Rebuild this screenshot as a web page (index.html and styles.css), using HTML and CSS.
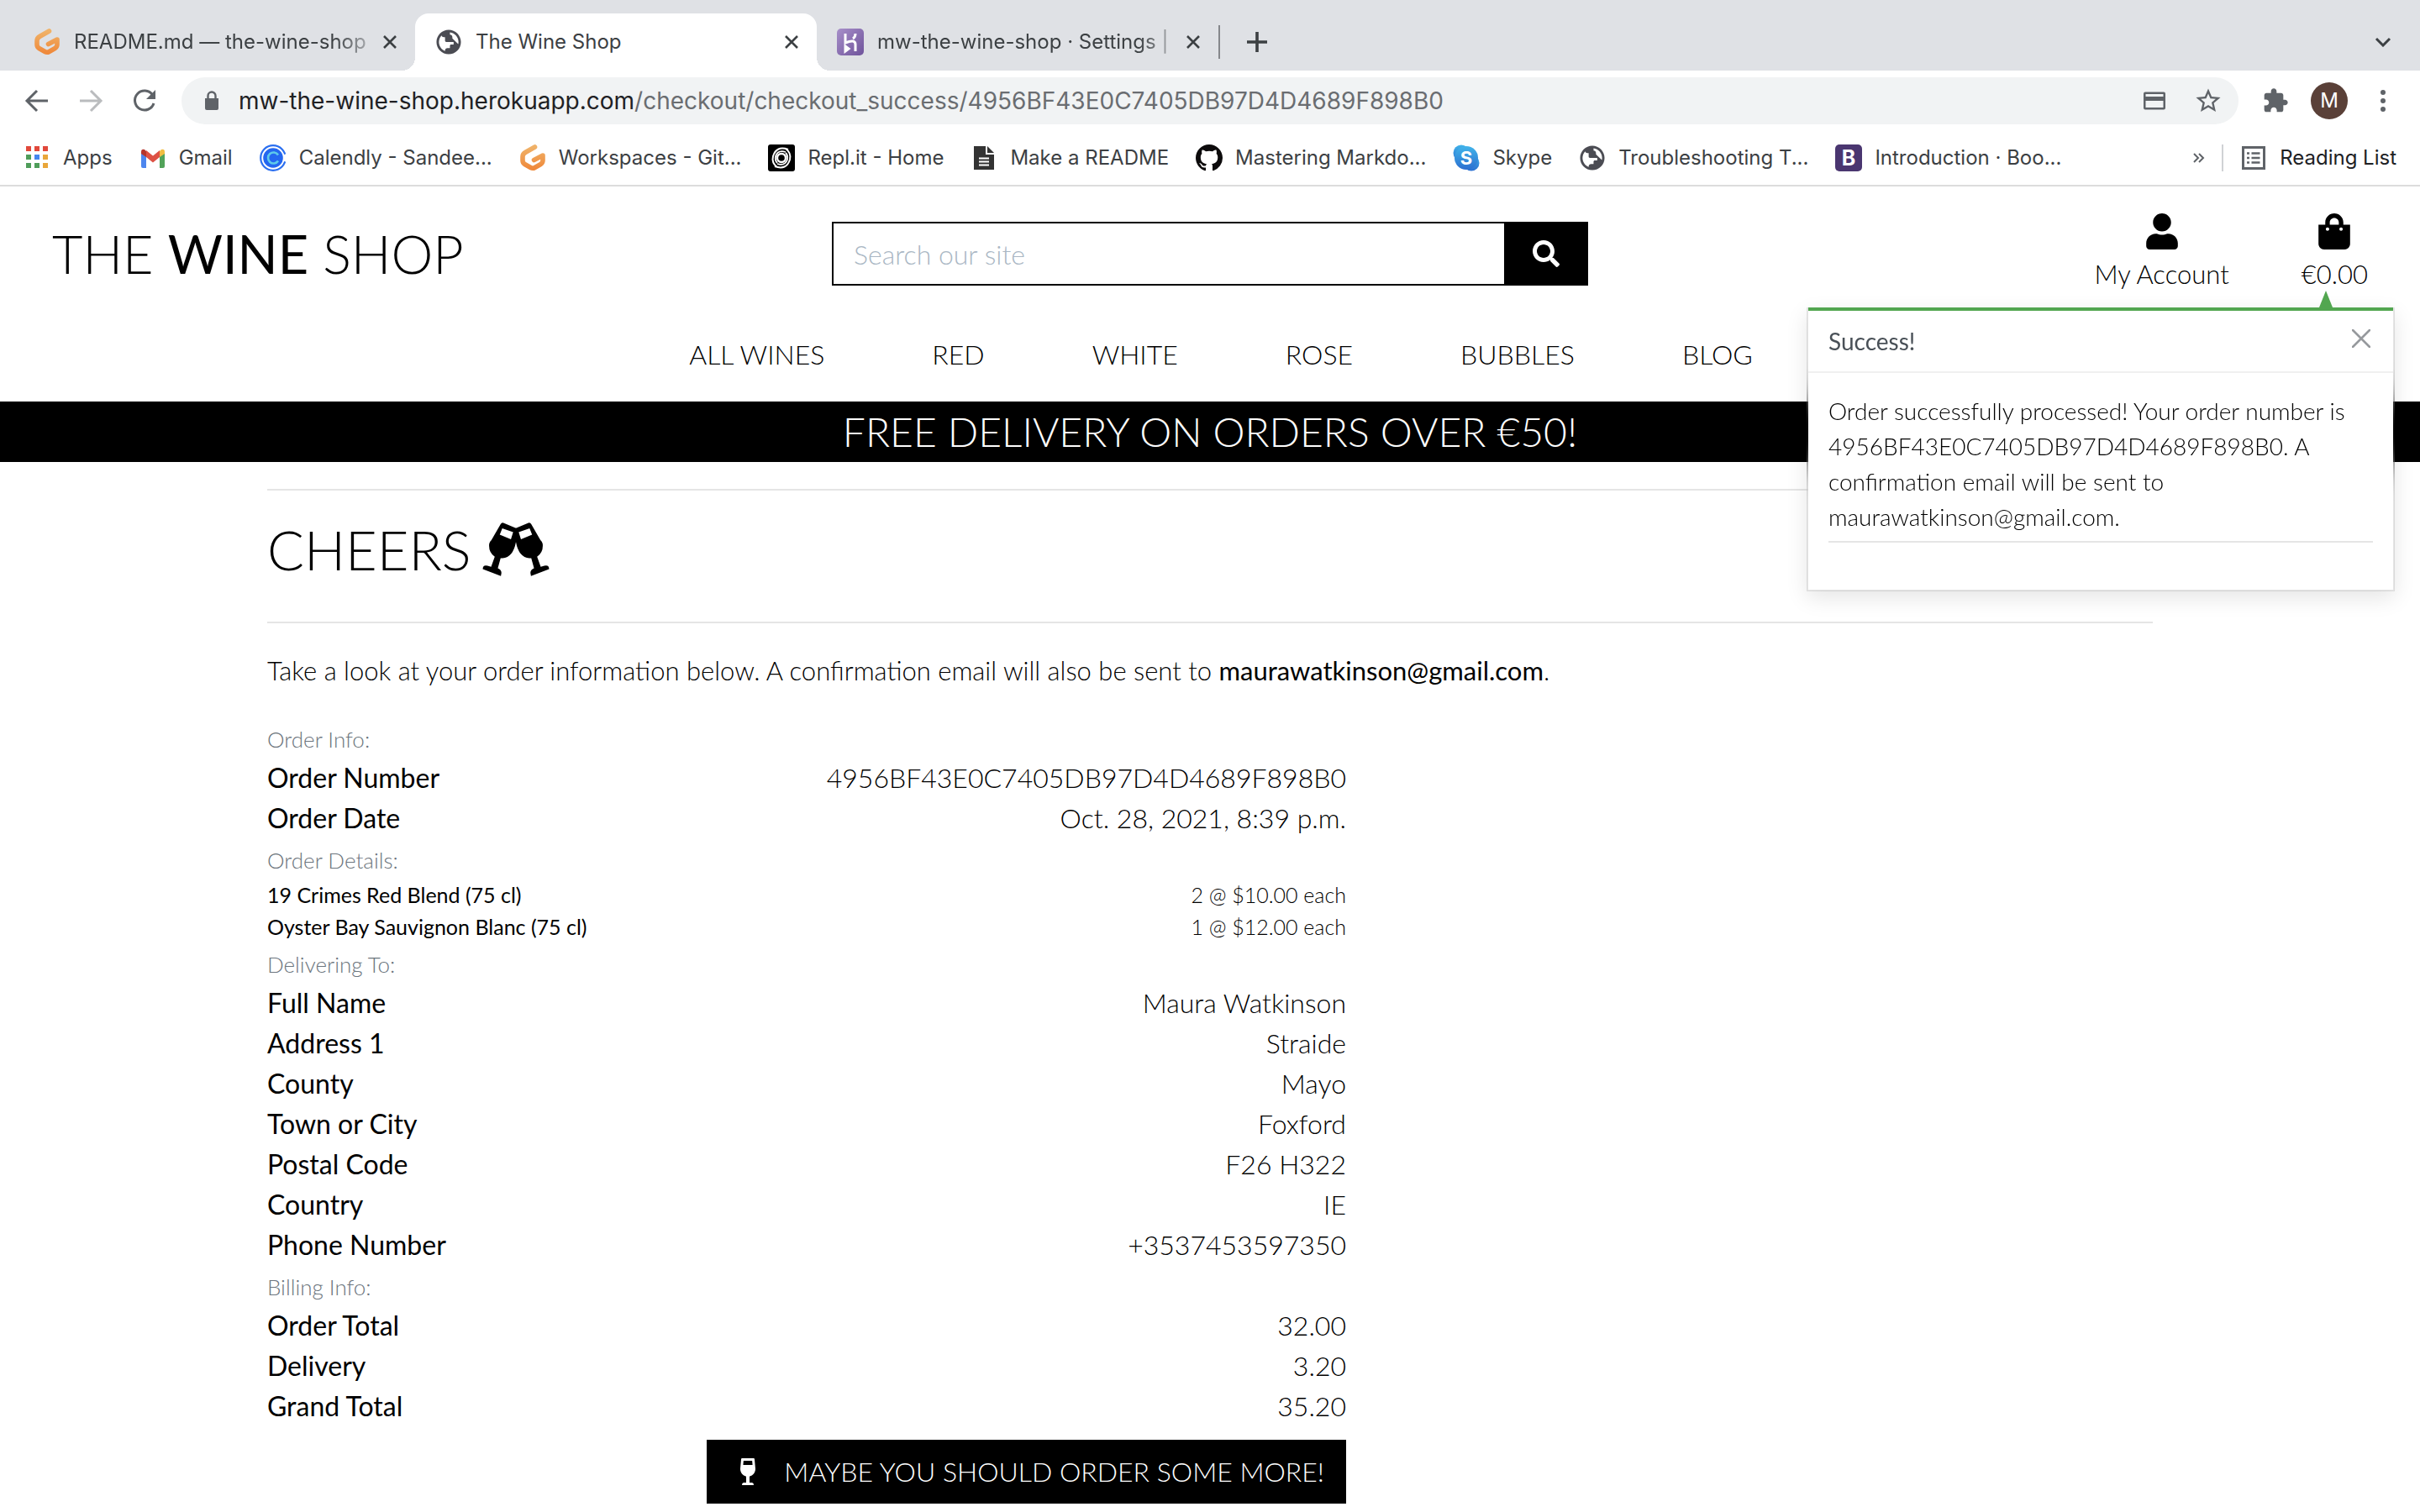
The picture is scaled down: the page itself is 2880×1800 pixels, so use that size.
FILE: index.html
```html
<!DOCTYPE html>
<html lang="en">
<head>
<meta charset="utf-8">
<meta name="viewport" content="width=device-width, initial-scale=1">
<title>The Wine Shop</title>
<link rel="stylesheet" href="styles.css">
</head>
<body>
<svg class="defs" aria-hidden="true">
  <defs>
    <linearGradient id="amber" x1="0" y1="0" x2="0" y2="1"><stop offset="0" stop-color="#f0b268"/><stop offset="1" stop-color="#ef8a3c"/></linearGradient>
    <linearGradient id="sky" x1="0" y1="0" x2="0" y2="1"><stop offset="0" stop-color="#41b4ea"/><stop offset="1" stop-color="#2b6fd0"/></linearGradient>
    <linearGradient id="violet" x1="0" y1="0" x2="1" y2="1"><stop offset="0" stop-color="#a78fc9"/><stop offset="1" stop-color="#6f539b"/></linearGradient>
    <symbol id="gitpod" viewBox="0 0 32 32"><path d="M18.500 3 L7.500 9.300 Q4 11.300 4 14.500 V19 Q4 22 6.500 23.500 L13.500 27.500 Q16 29 18.500 27.500 L25 23.800 Q28 22 28 19 V13 L17.500 18.500" fill="none" stroke="url(#amber)" stroke-width="5.600" stroke-linecap="round" stroke-linejoin="round"/></symbol>
    <symbol id="globe" viewBox="1 1 22 22"><path fill="#4b4c53" d="M12 2C6.480 2 2 6.480 2 12s4.480 10 10 10 10-4.480 10-10S17.520 2 12 2zm-1 17.930c-3.950-.490-7-3.850-7-7.930 0-.620.080-1.210.210-1.790L9 15v1c0 1.100.900 2 2 2v1.930zm6.900-2.540c-.260-.810-1-1.390-1.900-1.390h-1v-3c0-.550-.450-1-1-1H8v-2h2c.550 0 1-.450 1-1V7h2c1.100 0 2-.900 2-2v-.410c2.930 1.190 5 4.060 5 7.410 0 2.080-.800 3.970-2.100 5.390z" transform="rotate(180 12 12)"/></symbol>
    <symbol id="cross" viewBox="0 0 16 16"><path d="M1 1 15 15M15 1 1 15" fill="none" stroke="currentColor" stroke-width="2.600"/></symbol>
  </defs>
</svg>

<header class="browser">
  <div class="tabs">
    <div class="tab">
      <svg class="ico"><use href="#gitpod"/></svg>
      <span class="tab-title faded">README.md — the-wine-shop</span>
      <button class="tab-close" aria-label="Close tab"><svg><use href="#cross"/></svg></button>
    </div>
    <div class="tab active">
      <svg class="ico"><use href="#globe"/></svg>
      <span class="tab-title">The Wine Shop</span>
      <button class="tab-close" aria-label="Close tab"><svg><use href="#cross"/></svg></button>
    </div>
    <div class="tab">
      <svg class="ico" viewBox="0 0 32 32"><rect width="32" height="32" rx="5" fill="url(#violet)"/><path d="M10 6v11q12-5 12 2v8M22 6q0 4-3 6M10 21v6l4-3z" fill="none" stroke="#fff" stroke-width="3"/></svg>
      <span class="tab-title faded">mw-the-wine-shop · Settings |</span>
      <button class="tab-close" aria-label="Close tab"><svg><use href="#cross"/></svg></button>
    </div>
    <button class="new-tab" aria-label="New tab"><svg viewBox="0 0 24 24"><path d="M12 0V24M0 12H24" stroke="currentColor" stroke-width="3.600"/></svg></button>
    <button class="tab-search" aria-label="Search tabs"><svg viewBox="0 0 20 12"><path d="M2 2 10 10 18 2" fill="none" stroke="currentColor" stroke-width="3"/></svg></button>
  </div>

  <div class="toolbar">
    <button class="tool" aria-label="Back"><svg class="ico" viewBox="0 0 32 32"><path d="M29 16H5M16 4 4 16 16 28" fill="none" stroke="currentColor" stroke-width="3"/></svg></button>
    <button class="tool dim" aria-label="Forward"><svg class="ico" viewBox="0 0 32 32"><path d="M3 16H27M16 4 28 16 16 28" fill="none" stroke="currentColor" stroke-width="3"/></svg></button>
    <button class="tool" aria-label="Reload"><svg class="ico" viewBox="0 0 32 32"><path d="M25.500 9A11.500 11.500 0 1 0 27 19" fill="none" stroke="currentColor" stroke-width="3"/><path d="M29 3V14H18z" fill="currentColor"/></svg></button>
    <div class="omnibox">
      <svg class="ico" viewBox="0 0 32 32"><path d="M8 13h16v12q0 2-2 2H10q-2 0-2-2z" fill="#5f6368"/><path d="M11.500 14V10a4.500 4.500 0 0 1 9 0V14" fill="none" stroke="#5f6368" stroke-width="2.400"/></svg>
      <div class="url">mw-the-wine-shop.herokuapp.com<span>/checkout/checkout_success/4956BF43E0C7405DB97D4D4689F898B0</span></div>
      <svg class="ico" viewBox="0 0 32 32"><path d="M5 5.500h22q2 0 2 2v17q0 2-2 2H5q-2 0-2-2v-17q0-2 2-2zM5.500 8v3h21V8zM5.500 16v8h21v-8z" fill="#5f6368" fill-rule="evenodd"/></svg>
      <svg class="ico" viewBox="1 1 22 22"><path fill="#5f6368" d="M22 9.240l-7.190-.620L12 2 9.190 8.630 2 9.240l5.460 4.730L5.820 21 12 17.270 18.180 21l-1.630-7.030L22 9.240zM12 15.400l-3.760 2.270 1-4.280-3.320-2.880 4.380-.380L12 6.100l1.710 4.040 4.380.380-3.320 2.880 1 4.280L12 15.400z"/></svg>
    </div>
    <div class="profile">
      <svg class="ico" viewBox="0 0 24 24"><path fill="#5f6368" d="M20.500 11H19V7c0-1.100-.900-2-2-2h-4V3.500C13 2.120 11.880 1 10.500 1S8 2.120 8 3.500V5H4c-1.100 0-1.990.900-1.990 2v3.800H3.500c1.490 0 2.700 1.210 2.700 2.700s-1.210 2.700-2.700 2.700H2V20c0 1.100.900 2 2 2h3.800v-1.500c0-1.490 1.210-2.700 2.700-2.700 1.490 0 2.700 1.210 2.700 2.700V22H17c1.100 0 2-.900 2-2v-4h1.500c1.380 0 2.500-1.120 2.500-2.500S21.880 11 20.500 11z"/></svg>
      <button class="avatar" aria-label="Profile">M</button>
      <button class="tool" aria-label="Menu"><svg class="ico" viewBox="0 0 32 32" fill="currentColor"><circle cx="16" cy="6" r="3"/><circle cx="16" cy="16" r="3"/><circle cx="16" cy="26" r="3"/></svg></button>
    </div>
  </div>

  <nav class="bookmarks" aria-label="Bookmarks">
    <a href="#"><svg class="ico" viewBox="0 0 32 32"><path fill="#e1483b" d="M3 2h6v6H3zM13 2h6v6h-6zM23 2h6v6h-6z"/><path fill="#4f9d5a" d="M3 12h6v6H3zM3 22h6v6H3zM13 22h6v6h-6z"/><path fill="#4586ee" d="M13 12h6v6h-6z"/><path fill="#e9a63a" d="M23 12h6v6h-6zM23 22h6v6h-6z"/></svg>Apps</a>
    <a href="#"><svg class="ico" viewBox="0 0 32 32"><path fill="#4d86ee" d="M2 10v16q0 2 2 2h4V14z"/><path fill="#52a35a" d="M30 10v16q0 2-2 2h-4V14z"/><path fill="#f2bd42" d="M24 8l2-2q4-1 4 3v2l-6 4z"/><path fill="#b5352c" d="M8 8 6 6Q2 5 2 9v2l6 4z"/><path fill="#dd5144" d="M8 7l8 6.500L24 7v8l-8 6.500L8 15z"/></svg>Gmail</a>
    <a href="#"><svg class="ico" viewBox="0 0 32 32"><circle cx="16" cy="16" r="14.800" fill="#fff" stroke="#2b6ff0" stroke-width="2.200"/><circle cx="16" cy="16" r="8.800" fill="#fff" stroke="#2467f0" stroke-width="6"/><circle cx="16" cy="16" r="7" fill="#2467f0"/><path d="M22 19.500A6.500 6.500 0 1 1 22 12.500" fill="none" stroke="#5ecbea" stroke-width="2.600"/><path d="M28 12.500 32 11v10l-4-1.500z" fill="#fff"/></svg>Calendly - Sandee...</a>
    <a href="#"><svg class="ico"><use href="#gitpod"/></svg>Workspaces - Git...</a>
    <a href="#"><svg class="ico" viewBox="0 0 32 32"><rect width="32" height="32" rx="3"/><g fill="none" stroke="#fff"><circle cx="16" cy="16" r="5" stroke-width="2.400"/><path d="M24 6Q10 1 6 14q-2 8 5 13M8 26q14 5 18-8 2-8-5-13" stroke-width="2"/><path d="M21 9q-9-3-12 5-1 5 2 8M11 23q9 3 12-5 1-5-2-8" stroke-width="1.800"/></g></svg>Repl.it - Home</a>
    <a href="#"><svg class="ico" viewBox="0 0 32 32"><path fill="#333" d="M4 2h14v10h10v18H4zM20 2l8 8h-8z"/><path d="M10 16.500h12M10 20.500h12M10 24.500h12" stroke="#fff" stroke-width="1.800"/></svg>Make a README</a>
    <a href="#"><svg class="ico" viewBox="0 0 16 16"><path fill="#0d0b0c" d="M8 0C3.580 0 0 3.580 0 8c0 3.540 2.290 6.530 5.470 7.590.400.070.550-.170.550-.380 0-.190-.010-.820-.010-1.490-2.010.370-2.530-.490-2.690-.940-.090-.230-.480-.940-.820-1.130-.280-.150-.680-.520-.010-.530.630-.010 1.080.580 1.230.820.720 1.210 1.870.870 2.330.660.070-.520.280-.870.510-1.070-1.780-.200-3.640-.890-3.640-3.950 0-.870.310-1.590.820-2.150-.080-.200-.360-1.020.080-2.120 0 0 .670-.210 2.200.820.640-.180 1.320-.270 2-.270.680 0 1.360.090 2 .270 1.530-1.040 2.200-.820 2.200-.820.440 1.100.160 1.920.080 2.120.510.560.820 1.270.820 2.150 0 3.070-1.870 3.750-3.650 3.950.290.250.540.730.540 1.480 0 1.070-.010 1.930-.010 2.200 0 .210.150.460.550.380A8.013 8.013 0 0 0 16 8c0-4.420-3.580-8-8-8z"/></svg>Mastering Markdo...</a>
    <a href="#"><svg class="ico" viewBox="0 0 32 32"><circle cx="10" cy="10" r="9.500" fill="url(#sky)"/><circle cx="22" cy="22" r="9.500" fill="url(#sky)"/><circle cx="16" cy="16" r="14" fill="url(#sky)"/><text x="16" y="24" class="skype-s">S</text></svg>Skype</a>
    <a href="#"><svg class="ico"><use href="#globe"/></svg>Troubleshooting T...</a>
    <a href="#"><svg class="ico" viewBox="0 0 32 32"><rect width="32" height="32" rx="5" fill="#4a3670"/><text x="16" y="25" class="boot-b">B</text></svg>Introduction · Boo...</a>
    <div class="reading">
      <button class="more" aria-label="More bookmarks"><svg viewBox="0 0 14 12"><path d="M1 1 6 6 1 11M7 1 12 6 7 11" fill="none" stroke="currentColor" stroke-width="2"/></svg></button>
      <a href="#" class="reading-link"><svg class="ico" viewBox="0 0 32 32"><path d="M3.500 3.500h25v25h-25z" fill="none" stroke="#5f6368" stroke-width="3"/><path d="M8 10.500h3M8 16h3M8 21.500h3M13.500 10.500h10M13.500 16h10M13.500 21.500h10" stroke="#5f6368" stroke-width="2.600"/></svg>Reading List</a>
    </div>
  </nav>
</header>

<div class="shop">
  <header class="shop-header">
    <div class="top-row">
      <a href="#" class="logo">THE <strong>WINE</strong> SHOP</a>
      <form class="search" role="search">
        <input type="text" aria-label="Search our site" placeholder="Search our site">
        <button type="button" aria-label="Search"><svg viewBox="0 0 512 512"><path fill="currentColor" d="M505 442.700L405.300 343c-4.500-4.500-10.600-7-17-7H372c27.600-35.300 44-79.700 44-128C416 93.100 322.900 0 208 0S0 93.100 0 208s93.100 208 208 208c48.300 0 92.700-16.400 128-44v16.300c0 6.400 2.500 12.500 7 17l99.700 99.700c9.400 9.400 24.600 9.400 33.900 0l28.300-28.300c9.400-9.400 9.400-24.600.100-34zM208 336c-70.700 0-128-57.200-128-128 0-70.700 57.200-128 128-128 70.700 0 128 57.200 128 128 0 70.700-57.200 128-128 128z"/></svg></button>
      </form>
      <div class="account">
        <a href="#"><svg viewBox="0 0 448 512"><path d="M224 256c70.700 0 128-57.300 128-128S294.700 0 224 0 96 57.300 96 128s57.300 128 128 128zm89.600 32h-16.700c-22.200 10.200-46.900 16-72.900 16s-50.600-5.800-72.900-16h-16.700C60.200 288 0 348.200 0 422.400V464c0 26.500 21.500 48 48 48h352c26.500 0 48-21.500 48-48v-41.600c0-74.200-60.200-134.400-134.400-134.400z"/></svg>My Account</a>
        <a href="#"><svg viewBox="0 0 448 512"><path d="M352 160v-32C352 57.420 294.579 0 224 0 153.420 0 96 57.420 96 128v32H0v272c0 44.183 35.817 80 80 80h288c44.183 0 80-35.817 80-80V160h-96zm-192-32c0-35.290 28.710-64 64-64s64 28.710 64 64v32H160v-32zm160 120c-13.255 0-24-10.745-24-24s10.745-24 24-24 24 10.745 24 24-10.745 24-24 24zm-192 0c-13.255 0-24-10.745-24-24s10.745-24 24-24 24 10.745 24 24-10.745 24-24 24z"/></svg>€0.00</a>
      </div>
    </div>
    <nav class="menu" aria-label="Shop">
      <a href="#">ALL WINES</a>
      <a href="#">RED</a>
      <a href="#">WHITE</a>
      <a href="#">ROSE</a>
      <a href="#">BUBBLES</a>
      <a href="#">BLOG</a>
    </nav>
  </header>
  <div class="banner">FREE DELIVERY ON ORDERS OVER €50!</div>

  <main class="container">
    <hr>
    <h1>CHEERS
      <svg viewBox="40 65 240 193" aria-hidden="true">
        <g id="glass"><path fill-rule="evenodd" d="M105 71Q109 64 117 67L162 86 160 135Q150 190 112 193L105 193 95 229Q108 234 108 246L106 257 41 232Q41 216 58 220L71 224 84 188Q61 172 64 142Q65 134 72 128ZM111 86 102 109 142 125 150 100Z"/></g>
        <use href="#glass" transform="translate(320 0) scale(-1 1)"/>
      </svg>
    </h1>
    <hr>
    <p class="intro">Take a look at your order information below. A confirmation email will also be sent to <strong>maurawatkinson@gmail.com</strong>.</p>

    <section class="order">
      <h2><small>Order Info:</small></h2>
      <dl>
        <div><dt>Order Number</dt><dd>4956BF43E0C7405DB97D4D4689F898B0</dd></div>
        <div><dt>Order Date</dt><dd>Oct. 28, 2021, 8:39 p.m.</dd></div>
      </dl>
      <h2><small>Order Details:</small></h2>
      <dl class="items">
        <div><dt>19 Crimes Red Blend (75 cl)</dt><dd>2 @ $10.00 each</dd></div>
        <div><dt>Oyster Bay Sauvignon Blanc (75 cl)</dt><dd>1 @ $12.00 each</dd></div>
      </dl>
      <h2><small>Delivering To:</small></h2>
      <dl>
        <div><dt>Full Name</dt><dd>Maura Watkinson</dd></div>
        <div><dt>Address 1</dt><dd>Straide</dd></div>
        <div><dt>County</dt><dd>Mayo</dd></div>
        <div><dt>Town or City</dt><dd>Foxford</dd></div>
        <div><dt>Postal Code</dt><dd>F26 H322</dd></div>
        <div><dt>Country</dt><dd>IE</dd></div>
        <div><dt>Phone Number</dt><dd>+3537453597350</dd></div>
      </dl>
      <h2><small>Billing Info:</small></h2>
      <dl>
        <div><dt>Order Total</dt><dd>32.00</dd></div>
        <div><dt>Delivery</dt><dd>3.20</dd></div>
        <div><dt>Grand Total</dt><dd>35.20</dd></div>
      </dl>
      <a href="#" class="order-more"><svg viewBox="0 0 288 512"><path fill="currentColor" fill-rule="evenodd" d="M216 464h-40V346.810c68.470-15.890 118.050-79.910 111.400-154.160l-15.950-178.100C270.710 6.310 263.900 0 255.740 0H32.260c-8.150 0-14.970 6.310-15.700 14.550L.600 192.660C-6.050 266.910 43.530 330.930 112 346.820V464H72c-22.090 0-40 17.910-40 40 0 4.420 3.580 8 8 8h208c4.420 0 8-3.580 8-8 0-22.090-17.910-40-40-40zM61.750 48h164.500l7.170 80H54.580l7.170-80z"/></svg>MAYBE YOU SHOULD ORDER SOME MORE!</a>
    </section>
  </main>

  <div class="toast" role="status">
    <div class="toast-header">
      <span>Success!</span>
      <button aria-label="Close"><svg viewBox="0 0 22 22"><path d="M1 1 21 21M21 1 1 21" fill="none" stroke="currentColor" stroke-width="2.600" stroke-linecap="round"/></svg></button>
    </div>
    <div class="toast-body">
      <p>Order successfully processed! Your order number is 4956BF43E0C7405DB97D4D4689F898B0. A confirmation email will be sent to maurawatkinson@gmail.com.</p>
      <hr>
    </div>
  </div>
</div>
</body>
</html>
```
FILE: styles.css
```css
*, *::before, *::after { box-sizing: border-box; }
body { margin: 0; background: #fff; color: #000; font: 300 32px/48px Lato, sans-serif; }
a { color: inherit; text-decoration: none; }
button { padding: 0; border: 0; background: none; color: inherit; font: inherit; cursor: pointer; }
svg { display: block; flex: none; }
strong { font-weight: 400; }
hr { height: 2px; margin: 0; border: 0; background: #e5e5e5; }
.defs { position: absolute; width: 0; height: 0; }
.ico { width: 32px; height: 32px; }

/* Browser frame */
.browser { border-bottom: 2px solid #dcdcdc; color: #3c4043; font: 400 24px/32px Inter, "Liberation Sans", sans-serif; }
.tabs { display: flex; align-items: center; padding: 16px 34px 0 16px; background: #dfe1e5; }
.tab { position: relative; display: flex; align-items: center; flex: 0 1 478px; min-width: 0; height: 68px; gap: 16px; padding: 0 22px 0 24px; }
.tab.active { border-radius: 16px 16px 0 0; background: #fff; }
.tab.active::before, .tab.active::after { content: ""; position: absolute; bottom: 0; width: 16px; height: 16px; }
.tab.active::before { right: 100%; background: radial-gradient(circle at 0 0, transparent 16px, #fff 16px); }
.tab.active::after { left: 100%; background: radial-gradient(circle at 100% 0, transparent 16px, #fff 16px); }
.tab-title { flex: 1; min-width: 0; white-space: nowrap; }
.tab-title.faded { -webkit-mask-image: linear-gradient(90deg, #000 88%, rgba(0, 0, 0, .3)); mask-image: linear-gradient(90deg, #000 88%, rgba(0, 0, 0, .3)); }
.tab-close svg { width: 16px; height: 16px; }
.new-tab { padding-left: 32px; border-left: 2px solid #85878b; }
.new-tab svg { width: 24px; height: 40px; }
.tab-search { margin-left: auto; }
.tab-search svg { width: 20px; height: 12px; }

.toolbar { display: flex; align-items: center; gap: 32px; padding: 8px 28px; height: 72px; }
.tool { color: #5f6368; }
.dim { color: #babcbe; }
.omnibox { display: flex; align-items: center; flex: 1; min-width: 0; gap: 32px; height: 56px; margin: 0 -4px; padding: 0 20px; border-radius: 28px; background: #f1f3f4; }
.url { flex: 1; min-width: 0; margin-left: -16px; overflow: hidden; color: #202124; font-size: 28px; white-space: nowrap; }
.url span { color: #6a6d71; }
.profile { display: flex; align-items: center; gap: 26px; }
.avatar { width: 44px; height: 44px; border-radius: 50%; background: #5a4038; color: #fff; }

.bookmarks { display: flex; align-items: center; gap: 32px; height: 64px; padding: 0 28px; white-space: nowrap; }
.bookmarks a { display: flex; align-items: center; gap: 15px; }
.skype-s { fill: #fff; font: 700 22px Inter, sans-serif; text-anchor: middle; }
.boot-b { fill: #fff; font: 700 25px Inter, sans-serif; text-anchor: middle; }
.reading { display: flex; align-items: center; gap: 20px; margin-left: auto; color: #202124; }
.more { color: #5f6368; }
.more svg { width: 14px; height: 12px; }
.reading-link { padding-left: 20px; border-left: 2px solid #d0d2d5; }

/* Shop header */
.shop { position: relative; }
.shop-header { padding: 32px 62px; }
.top-row { display: grid; grid-template-columns: 1fr minmax(0, 900px) 1fr; align-items: center; }
.logo { font-size: 63px; line-height: 76px; white-space: nowrap; }
.search { display: flex; height: 76px; }
.search input { flex: 1; min-width: 0; padding: 2px 24px 0; border: 2px solid #000; border-right: 0; border-radius: 0; background: #fff; color: #000; font: inherit; outline: 0; }
.search input::placeholder { color: #aab7c4; opacity: 1; }
.search button { width: 100px; background: #000; color: #fff; }
.search button svg { width: 32px; height: 32px; margin: auto; }
.account { display: flex; justify-content: flex-end; gap: 86px; font-size: 31px; }
.account a { display: flex; flex-direction: column; align-items: center; gap: 5px; }
.account svg { width: 38px; height: 43px; }
.menu { display: flex; justify-content: center; gap: 128px; margin-top: 48px; padding-left: 26px; }
.banner { padding: 12px; background: #000; color: #fff; font-size: 48px; text-align: center; }

/* Checkout success */
.container { max-width: 2244px; margin: 32px auto 0; }
h1 { display: flex; align-items: center; gap: 13px; margin: 32px 0 48px; font-size: 65px; font-weight: 300; line-height: 76px; }
h1 svg { width: 80px; height: 64px; }
.intro { margin: 32px 0; font-size: 31px; }
.order { display: flex; flex-direction: column; width: 57%; min-width: 1284px; }
.order h2 { margin: 0; color: #6c757d; font-size: 32px; font-weight: 300; line-height: 48px; }
.order h2 small { font-size: 26px; line-height: 32px; }
dl { margin: 0; }
dl div { display: flex; justify-content: space-between; }
dt { font-weight: 400; }
dd { margin: 0; }
.items { font-size: 25px; line-height: 38px; }
.order-more { display: flex; align-items: center; align-self: flex-end; gap: 34px; height: 76px; margin-top: 16px; padding: 0 26px 0 40px; background: #000; color: #fff; }
.order-more svg { width: 18px; height: 32px; }

/* Notification under the basket */
.toast { position: absolute; top: 144px; right: 30px; width: 700px; border: 2px solid rgba(0, 0, 0, .1); border-top: 0; background: #fff; background-clip: padding-box; box-shadow: 0 8px 24px rgba(0, 0, 0, .1); backdrop-filter: blur(20px); font-size: 28px; line-height: 42px; }
.toast::before { content: ""; position: absolute; right: 72px; bottom: 100%; border: 8px solid transparent; border-top: 0; border-bottom: 20px solid #52a650; }
.toast-header { display: flex; align-items: center; justify-content: space-between; height: 78px; padding: 0 24px; border-top: 4px solid #52a650; border-bottom: 2px solid #f0f0f0; color: #495057; font-weight: 400; }
.toast-header button { padding: 0 3px 6px; color: #96999d; }
.toast-header svg { width: 22px; height: 22px; }
.toast-body { padding: 24px 24px 56px; }
.toast-body p { margin: 0 0 8px; }
```
